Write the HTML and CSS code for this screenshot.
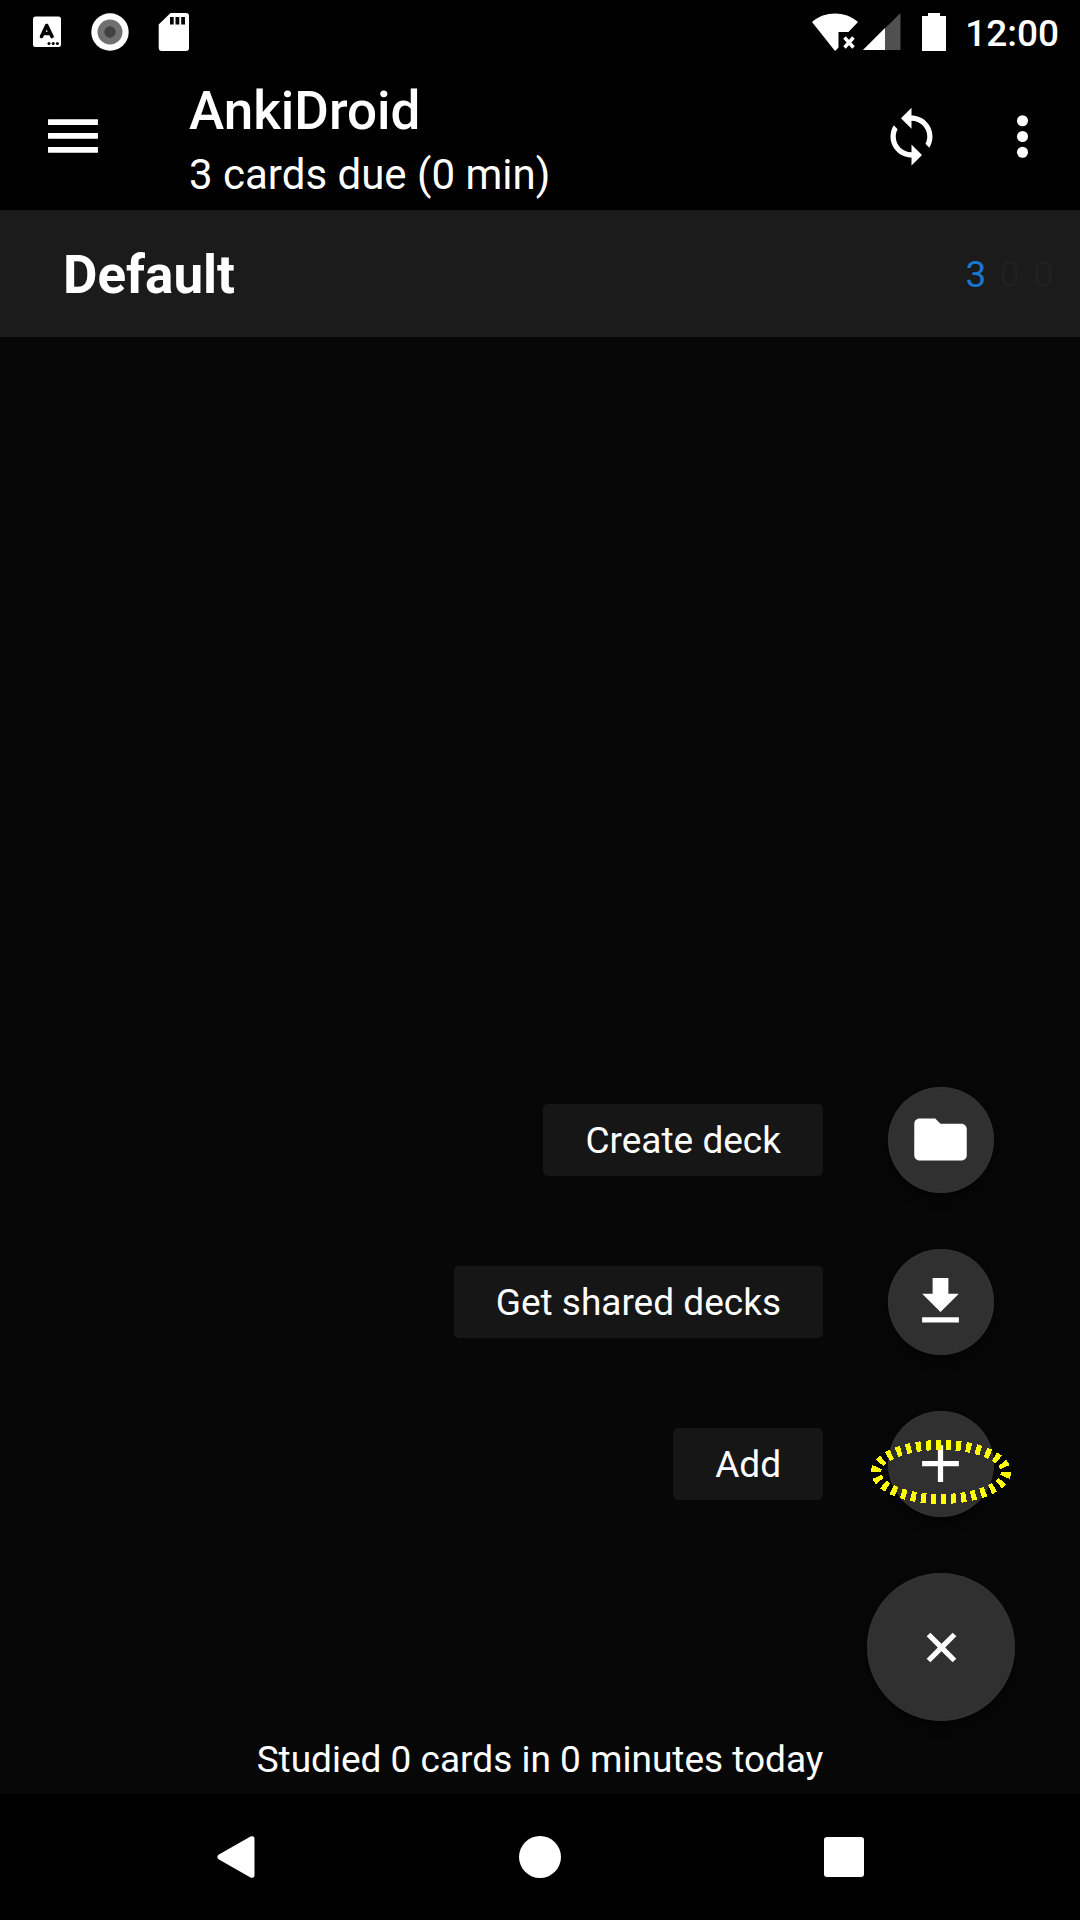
FILE: index.html
```html
<!DOCTYPE html>
<html lang="en">
<head>
<meta charset="utf-8">
<meta name="viewport" content="width=device-width, initial-scale=1">
<title>AnkiDroid</title>
<link rel="stylesheet" href="styles.css">
</head>
<body>
<div class="screen">
  <div class="status-bar">
    <div class="notifications">
      <svg width="30" height="32" viewBox="0 0 30 32" aria-hidden="true">
        <rect x="1" y="0.5" width="28" height="30.5" rx="2.5" fill="#fff"/>
        <path d="M9.500 20.500 14.700 9.500 20 20.500M11.500 17.500h6.500" fill="none" stroke="#000" stroke-width="3.600" stroke-linecap="round" stroke-linejoin="round"/>
        <g fill="#000"><circle cx="17" cy="27.500" r="1.500"/><circle cx="21.200" cy="27.500" r="1.500"/><circle cx="25.400" cy="27.500" r="1.500"/></g>
      </svg>
      <svg width="38" height="38" viewBox="0 0 38 38" aria-hidden="true">
        <circle cx="19" cy="19" r="18.700" fill="#fff"/>
        <circle cx="19" cy="19" r="12.500" fill="#707070"/>
        <circle cx="19" cy="19" r="5.700" fill="#424242"/>
      </svg>
      <svg width="32" height="38" viewBox="0 0 32 38" aria-hidden="true">
        <path d="M12.500 0H28a3 3 0 0 1 3 3v32a3 3 0 0 1-3 3H3.700a3 3 0 0 1-3-3V11.500z" fill="#fff"/>
        <path d="M12 4h3.700v7.500H12zM17.500 4h3.800v7.500h-3.800zM23.200 4H27v7.500h-3.800z" fill="#000"/>
      </svg>
    </div>
    <div class="system">
      <svg width="46" height="38" viewBox="0 0 46 38" aria-hidden="true">
        <path d="M0 9C13-2.300 33-2.300 46 9L36.500 19H26.500v15.500L23 38z" fill="#fff"/>
        <path d="M32.500 24.500l9 10M41.500 24.500l-9 10" stroke="#fff" stroke-width="3.400"/>
      </svg>
      <svg class="signal" width="38" height="38" viewBox="0 0 38 38" aria-hidden="true">
        <path d="M0 37 37.500 0v37z" fill="#505050"/>
        <path d="M0 37 22 15v22z" fill="#fff"/>
      </svg>
      <svg class="battery" width="24" height="38" viewBox="0 0 24 38" aria-hidden="true">
        <path d="M6 0h12v3h6v35H0V3h6z" fill="#fff"/>
      </svg>
      <span class="clock">12:00</span>
    </div>
  </div>

  <header class="toolbar">
    <button class="icon-button" type="button" aria-label="Open menu">
      <svg class="icon" viewBox="0 0 24 24"><path d="M2.300 18.200h19V16h-19zM2.300 12.900h19v-2.200h-19zM2.300 5.400v2.200h19V5.400z"/></svg>
    </button>
    <div class="titles">
      <h1 class="title">AnkiDroid</h1>
      <p class="subtitle">3 cards due (0 min)</p>
    </div>
    <div class="actions">
      <button class="icon-button" type="button" aria-label="Synchronize">
        <svg class="icon" viewBox="0 0 24 24"><path d="M12 4V1L8 5l4 4V6c3.310 0 6 2.690 6 6 0 1.010-.25 1.970-.7 2.800l1.460 1.460C19.540 15.030 20 13.570 20 12c0-4.420-3.580-8-8-8zm0 14c-3.310 0-6-2.690-6-6 0-1.010.25-1.970.7-2.800L5.240 7.740C4.460 8.970 4 10.430 4 12c0 4.420 3.580 8 8 8v3l4-4-4-4v3z"/></svg>
      </button>
      <button class="icon-button" type="button" aria-label="More options">
        <svg class="icon" viewBox="0 0 24 24"><circle cx="12" cy="6" r="2.100"/><circle cx="12" cy="12" r="2.100"/><circle cx="12" cy="18" r="2.100"/></svg>
      </button>
    </div>
  </header>

  <main class="content">
    <ul class="decks">
      <li>
        <a class="deck" href="#default">
          <span class="deck-name">Default</span>
          <span class="counts">
            <span class="count new">3</span>
            <span class="count">0</span>
            <span class="count">0</span>
          </span>
        </a>
      </li>
    </ul>

    <div class="fab-menu">
      <button class="fab-item" type="button">
        <span class="fab-label">Create deck</span>
        <span class="fab fab-mini"><svg class="icon" viewBox="0 0 24 24"><path d="M10 4H4c-1.100 0-1.990.9-1.990 2L2 18c0 1.100.9 2 2 2h16c1.100 0 2-.9 2-2V8c0-1.100-.9-2-2-2h-8l-2-2z"/></svg></span>
      </button>
      <button class="fab-item" type="button">
        <span class="fab-label">Get shared decks</span>
        <span class="fab fab-mini"><svg class="icon" viewBox="0 0 24 24"><path d="M19 9h-4V3H9v6H5l7 7 7-7zM5 18v2h14v-2H5z"/></svg></span>
      </button>
      <button class="fab-item" type="button">
        <span class="fab-label">Add</span>
        <span class="fab fab-mini">
          <svg class="icon" viewBox="0 0 24 24"><path d="M19 13h-6v6h-2v-6H5v-2h6V5h2v6h6v2z"/></svg>
          <svg class="highlight" viewBox="0 0 140 66" aria-hidden="true"><ellipse cx="70" cy="33" rx="65" ry="27" pathLength="300"/></svg>
        </span>
      </button>
      <button class="fab fab-main" type="button" aria-label="Close menu">
        <svg class="icon" viewBox="0 0 24 24"><path transform="rotate(45 12 12)" d="M19 13h-6v6h-2v-6H5v-2h6V5h2v6h6v2z"/></svg>
      </button>
    </div>

    <p class="summary">Studied 0 cards in 0 minutes today</p>
  </main>

  <nav class="nav-bar" aria-label="System">
    <button class="nav-button" type="button" aria-label="Back">
      <svg width="38" height="42" viewBox="0 0 38 42"><path d="M1.500 18.800 33.500.6Q37.500-.8 37.500 3v36Q37.500 42.800 33.500 41.400L1.500 23.200Q-.8 21 1.500 18.800z"/></svg>
    </button>
    <button class="nav-button" type="button" aria-label="Home">
      <svg width="42" height="42" viewBox="0 0 42 42"><circle cx="21" cy="21" r="21"/></svg>
    </button>
    <button class="nav-button" type="button" aria-label="Recent apps">
      <svg width="40" height="40" viewBox="0 0 40 40"><rect width="40" height="40" rx="3"/></svg>
    </button>
  </nav>
</div>
</body>
</html>
```
FILE: styles.css
```css
* {
  box-sizing: border-box;
}

body,
h1,
p,
ul {
  margin: 0;
  padding: 0;
}

body {
  background: #070707;
  color: #fff;
  font-family: Roboto, "Noto Sans", sans-serif;
}

button {
  margin: 0;
  padding: 0;
  border: 0;
  background: none;
  color: inherit;
  font: inherit;
  cursor: pointer;
}

svg {
  display: block;
  flex: none;
}

.screen {
  display: flex;
  flex-direction: column;
  min-height: 100vh;
}

/* Status bar */
.status-bar {
  display: flex;
  align-items: center;
  justify-content: space-between;
  height: 63px;
  padding: 0 21px 0 32px;
  background: #000;
}

.notifications,
.system {
  display: flex;
  align-items: center;
}

.notifications {
  gap: 29px;
}

.signal {
  margin-left: 5px;
}

.battery {
  margin: 0 19px 0 21px;
}

.clock {
  font-size: 37px;
  font-weight: 500;
  line-height: 42px;
  padding-top: 4px;
}

/* Toolbar */
.toolbar {
  display: flex;
  align-items: center;
  min-height: 147px;
  padding: 0 26px 0 42px;
  background: #000;
}

.icon-button {
  flex: none;
}

.icon {
  width: 63px;
  height: 63px;
  fill: currentColor;
}

.titles {
  flex: 1;
  padding: 12px 0 0 84px;
}

.title {
  font-size: 53px;
  font-weight: 500;
  line-height: 64px;
}

.subtitle {
  font-size: 42px;
  line-height: 64px;
}

.actions {
  display: flex;
  gap: 48px;
}

/* Deck list */
.content {
  display: flex;
  flex: 1;
  flex-direction: column;
}

.decks {
  list-style: none;
}

.deck {
  display: flex;
  align-items: center;
  justify-content: space-between;
  min-height: 127px;
  padding: 2px 26px 0 63px;
  background: #1b1b1b;
  color: inherit;
  text-decoration: none;
}

.deck-name {
  font-size: 53px;
  font-weight: 700;
  line-height: 64px;
}

.counts {
  display: flex;
  gap: 13px;
  color: #202020;
  font-size: 37px;
  line-height: 42px;
}

.new {
  color: #1976d2;
}

/* Floating action menu */
.fab-menu {
  display: flex;
  flex-direction: column;
  align-items: flex-end;
  margin-top: auto;
  padding: 56px 65px 0;
}

.fab-item {
  display: flex;
  align-items: center;
  gap: 65px;
  margin: 0 21px 56px 0;
}

.fab-label {
  padding: 16px 42px 14px;
  border-radius: 5px;
  background: #161616;
  font-size: 37px;
  line-height: 42px;
}

.fab {
  position: relative;
  display: grid;
  flex: none;
  place-items: center;
  border-radius: 50%;
  background: #303030;
  box-shadow: inset 0 0 3px #3a3a3a, 0 8px 12px rgba(0, 0, 0, 0.4);
}

.fab-mini {
  width: 106px;
  height: 106px;
  padding: 0 1px 1px 0;
}

.fab-main {
  width: 148px;
  height: 148px;
}

.highlight {
  position: absolute;
  top: 28px;
  left: -17px;
  width: 140px;
  height: 66px;
  fill: none;
  stroke: #ff0;
  stroke-width: 10;
  stroke-dasharray: 5 5;
  shape-rendering: crispEdges;
}

.summary {
  padding: 18px 0 13px;
  font-size: 37px;
  line-height: 42px;
  text-align: center;
}

/* Navigation bar */
.nav-bar {
  display: grid;
  grid-template-columns: repeat(3, 1fr);
  height: 126px;
  padding: 0 84px;
  background: #000;
}

.nav-button {
  display: grid;
  place-items: center;
  fill: #fff;
}
```
